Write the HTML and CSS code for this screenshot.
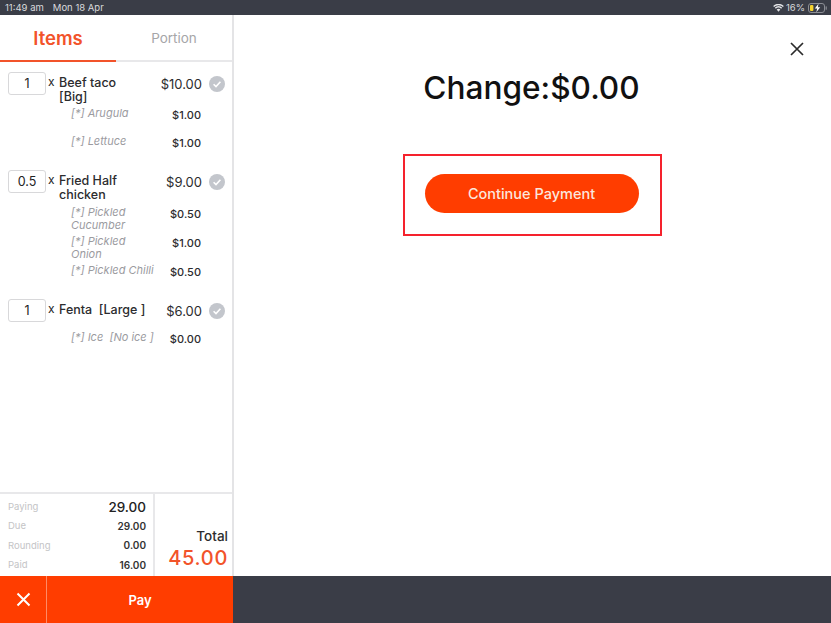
FILE: index.html
```html
<!DOCTYPE html>
<html lang="en">
<head>
<meta charset="utf-8">
<title>Change</title>
<link rel="stylesheet" href="styles.css">
</head>
<body>
<div class="app">
  <header class="status">
    <span class="status-time">11:49 am</span>
    <span class="status-date">Mon 18 Apr</span>
    <span class="status-right">
      <svg class="wifi" width="11" height="8" viewBox="0 0 12 9"><path d="M6 8.6 3.9 6.3a3 3 0 0 1 4.2 0Z M3 5.4 1.8 4.1a6 6 0 0 1 8.4 0L9 5.4a4.3 4.3 0 0 0-6 0Z M1 3.3 0 2.2a8.6 8.6 0 0 1 12 0l-1 1.1a7.2 7.2 0 0 0-10 0Z" fill="#e4e5e8"/></svg>
      <span class="battery-text">16%</span>
      <svg width="20" height="10" viewBox="0 0 20 10"><rect x=".5" y=".5" width="16" height="9" rx="2.5" fill="none" stroke="#8b8d94"/><rect x="2" y="2" width="3.4" height="6" rx="1" fill="#f6d32d"/><path d="M10.5.8 6.8 5.6h2.4L8.3 9.2l3.9-5H9.8Z" fill="#fff"/><rect x="17.6" y="3.2" width="1.2" height="3.6" rx=".6" fill="#8b8d94"/></svg>
    </span>
  </header>
  <div class="main">
    <aside class="sidebar">
      <nav class="tabs">
        <div class="tab tab-active">Items</div>
        <div class="tab">Portion</div>
      </nav>
      <section class="list">
        <article class="item">
          <div class="item-row">
            <div class="qty">1</div><span class="times">x</span>
            <div class="name">Beef taco<br>[Big]</div>
            <div class="price">$10.00</div>
            <svg class="check" viewBox="0 0 16 16"><circle cx="8" cy="8" r="8" fill="#c3c6cc"/><path d="M4.6 8.2 7 10.6l4.4-4.8" fill="none" stroke="#fff" stroke-width="1.6"/></svg>
          </div>
          <div class="sub sub-tall"><span class="sub-name">[*] Arugula</span><span class="sub-price">$1.00</span></div>
          <div class="sub sub-tall"><span class="sub-name">[*] Lettuce</span><span class="sub-price">$1.00</span></div>
        </article>
        <article class="item item-second">
          <div class="item-row">
            <div class="qty">0.5</div><span class="times">x</span>
            <div class="name">Fried Half<br>chicken</div>
            <div class="price">$9.00</div>
            <svg class="check" viewBox="0 0 16 16"><circle cx="8" cy="8" r="8" fill="#c3c6cc"/><path d="M4.6 8.2 7 10.6l4.4-4.8" fill="none" stroke="#fff" stroke-width="1.6"/></svg>
          </div>
          <div class="sub"><span class="sub-name">[*] Pickled<br>Cucumber</span><span class="sub-price">$0.50</span></div>
          <div class="sub"><span class="sub-name">[*] Pickled<br>Onion</span><span class="sub-price">$1.00</span></div>
          <div class="sub"><span class="sub-name">[*] Pickled Chilli</span><span class="sub-price">$0.50</span></div>
        </article>
        <article class="item item-third">
          <div class="item-row item-row-single">
            <div class="qty">1</div><span class="times">x</span>
            <div class="name">Fenta&nbsp; [Large ]</div>
            <div class="price">$6.00</div>
            <svg class="check" viewBox="0 0 16 16"><circle cx="8" cy="8" r="8" fill="#c3c6cc"/><path d="M4.6 8.2 7 10.6l4.4-4.8" fill="none" stroke="#fff" stroke-width="1.6"/></svg>
          </div>
          <div class="sub"><span class="sub-name">[*] Ice&nbsp; [No ice ]</span><span class="sub-price">$0.00</span></div>
        </article>
      </section>
      <section class="summary">
        <div class="figures">
          <div class="fig"><span>Paying</span><b class="fig-lead">29.00</b></div>
          <div class="fig"><span>Due</span><b>29.00</b></div>
          <div class="fig"><span>Rounding</span><b>0.00</b></div>
          <div class="fig"><span>Paid</span><b>16.00</b></div>
        </div>
        <div class="total">
          <div class="total-label">Total</div>
          <div class="total-value">45.00</div>
        </div>
      </section>
    </aside>
    <main class="content">
      <button class="close" aria-label="Close">
        <svg width="14" height="14" viewBox="0 0 14 14"><path d="M1 1l12 12M13 1 1 13" stroke="#2b2b2b" stroke-width="1.7" fill="none"/></svg>
      </button>
      <h1 class="change">Change:$0.00</h1>
      <div class="highlight"><div class="continue">Continue Payment</div></div>
    </main>
  </div>
  <footer class="footer">
    <div class="actions">
      <div class="cancel"><svg width="15" height="15" viewBox="0 0 15 15"><path d="M1.5 1.5l12 12M13.5 1.5l-12 12" stroke="#fff" stroke-width="2" fill="none"/></svg></div>
      <div class="pay">Pay</div>
    </div>
  </footer>
</div>
</body>
</html>
```
FILE: styles.css
```css
* { box-sizing: border-box; }
html, body { margin: 0; height: 100%; }
body { font-family: Inter, "Liberation Sans", sans-serif; background: #fff; color: #222; overflow: hidden; }
.app { width: 831px; height: 623px; display: flex; flex-direction: column; }

.status { height: 15px; flex: none; background: #3a3d47; color: #d9dadd; font-size: 9.5px; display: flex; align-items: center; padding: 0 3px 0 5px; }
.status-date { margin-left: 9px; }
.status-right { margin-left: auto; display: flex; align-items: center; gap: 2px; }
.battery-text { margin-right: 1px; }

.main { flex: 1; min-height: 0; display: flex; }
.sidebar { width: 234px; flex: none; border-right: 2px solid #e4e4e6; display: flex; flex-direction: column; }

.tabs { height: 47px; flex: none; display: flex; border-bottom: 2px solid #e8e8ea; }
.tab { flex: 1; display: flex; align-items: center; justify-content: center; font-size: 13.5px; font-weight: 400; color: #a6a6a8; padding-top: 1px; }
.tab-active { flex: none; width: 116px; color: #f2532a; font-size: 18.5px; font-weight: 600; border-bottom: 2px solid #f2532a; margin-bottom: -2px; }

.list { flex: 1; min-height: 0; }
.item { padding-top: 10px; }
.item-second { padding-top: 7px; }
.item-third { padding-top: 16px; }
.item-row { display: flex; align-items: flex-start; padding-left: 8px; margin-bottom: 3px; }
.item-second .item-row { margin-bottom: 4px; }
.item-third .item-row { margin-bottom: 8px; }
.qty { width: 38px; height: 23px; flex: none; border: 1px solid #d8d8da; border-radius: 3px; display: flex; align-items: center; justify-content: center; font-size: 12.5px; color: #222; }
.times { width: 13px; flex: none; padding-left: 2px; font-size: 12px; line-height: 20px; }
.name { width: 90px; flex: none; font-size: 12.5px; font-weight: 500; line-height: 14px; padding-top: 4px; color: #2c2c2e; }
.item-row-single .name { width: 100px; }
.price { margin-left: auto; font-size: 13px; line-height: 24px; color: #2c2c2e; }
.check { width: 16px; height: 16px; flex: none; margin: 4px 7px 0 7px; }

.sub { display: flex; justify-content: space-between; align-items: flex-start; padding: 0 31px 0 71px; font-size: 11px; line-height: 13px; margin-bottom: 3px; }
.sub-tall { height: 28px; margin-bottom: 0; }
.sub-name { color: #9b9b9f; font-style: italic; white-space: nowrap; }
.sub-price { font-size: 11px; font-weight: 500; color: #2c2c2e; line-height: 15px; padding-top: 1px; }

.summary { height: 84px; flex: none; border-top: 2px solid #e8e8ea; display: flex; }
.figures { width: 155px; flex: none; border-right: 2px solid #e8e8ea; padding: 3px 7px 0 8px; }
.fig { height: 19.3px; display: flex; justify-content: space-between; align-items: center; font-size: 9.5px; color: #c4c4c6; }
.fig b { font-weight: 600; font-size: 10px; color: #333; }
.fig b.fig-lead { font-size: 13.5px; font-weight: 500; color: #222; }
.total { flex: 1; display: flex; flex-direction: column; justify-content: flex-end; align-items: flex-end; padding: 0 4px 5px 0; }
.total-label { font-size: 13.5px; font-weight: 500; color: #2c2c2e; line-height: 17px; }
.total-value { font-size: 20px; font-weight: 500; color: #f2532a; line-height: 26px; letter-spacing: .7px; }

.content { flex: 1; display: flex; flex-direction: column; align-items: center; position: relative; padding-right: 2px; }
.close { position: absolute; top: 27px; right: 27px; padding: 0; width: 14px; height: 14px; border: 0; background: none; display: block; }
.close svg { display: block; }
.change { margin: 54px 0 0; font-size: 31.6px; line-height: 38px; font-weight: 500; color: #111; }
.highlight { margin: 47px 0 0 2px; width: 259px; height: 82px; border: 2px solid #f5222d; padding: 0 2px 4px 0; display: flex; align-items: center; justify-content: center; }
.continue { width: 214px; height: 39px; border-radius: 20px; background: #ff3d00; color: #fbe6dc; font-size: 14.5px; font-weight: 500; display: flex; align-items: center; justify-content: center; }

.footer { height: 47px; flex: none; background: #3a3d47; }
.actions { width: 233px; height: 100%; background: #ff3d00; display: flex; color: #fff; }
.cancel { width: 47px; flex: none; border-right: 1px solid #ff8a66; display: flex; align-items: center; justify-content: center; }
.pay { flex: 1; display: flex; align-items: center; justify-content: center; font-size: 13px; font-weight: 600; color: #fff; }
```
